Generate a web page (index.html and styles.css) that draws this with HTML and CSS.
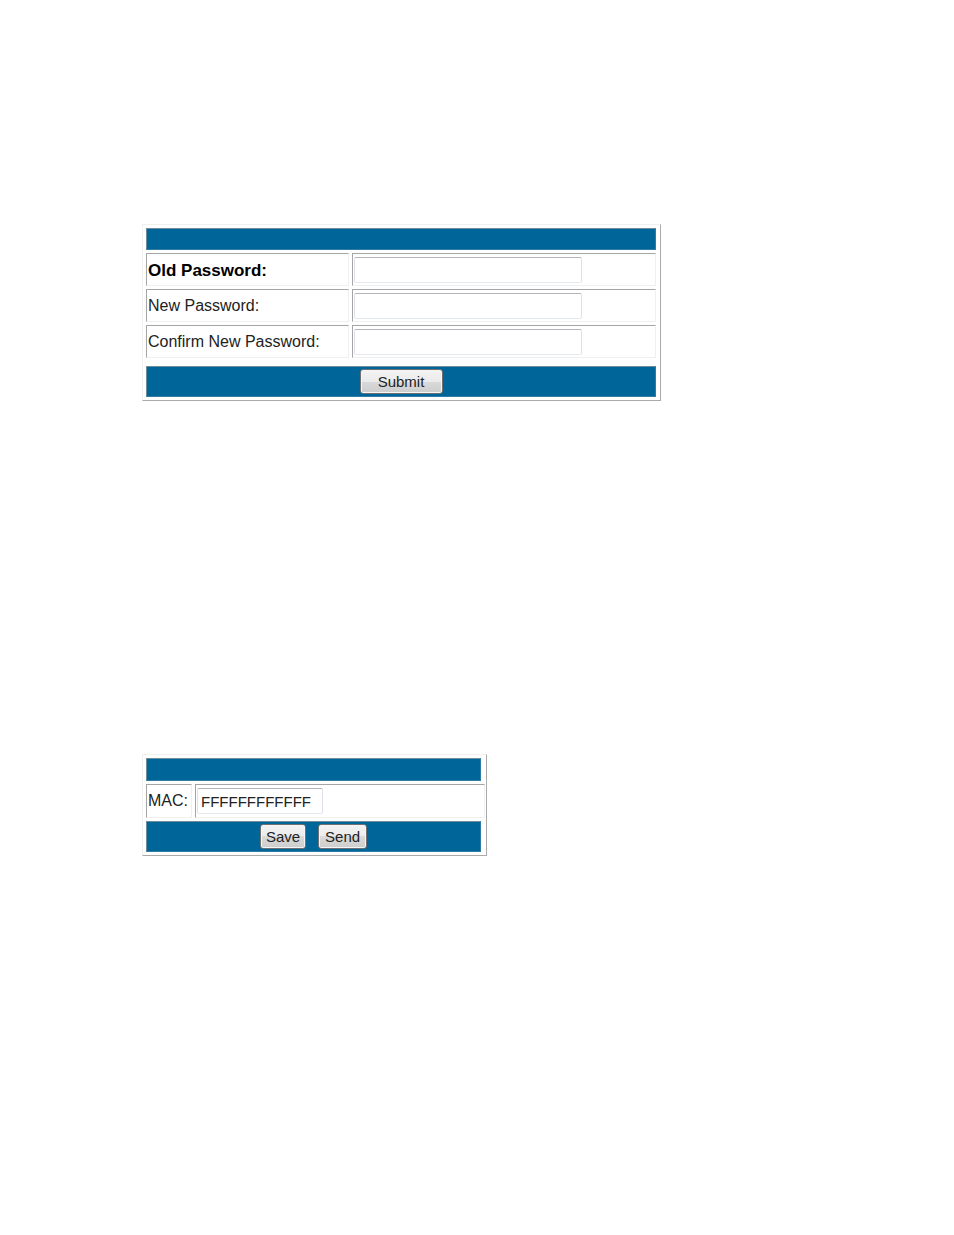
FILE: index.html
```html
<!DOCTYPE html>
<html lang="en">
<head>
<meta charset="utf-8">
<title>Device Settings</title>
<link rel="stylesheet" href="styles.css">
</head>
<body>
<main class="page">
  <form class="panel panel-password">
    <div class="bar"></div>
    <div class="row">
      <label class="cell label-strong" for="old">Old Password:</label>
      <div class="cell"><input class="field" type="password" id="old"></div>
    </div>
    <div class="row">
      <label class="cell" for="new">New Password:</label>
      <div class="cell"><input class="field" type="password" id="new"></div>
    </div>
    <div class="row">
      <label class="cell" for="confirm">Confirm New Password:</label>
      <div class="cell"><input class="field" type="password" id="confirm"></div>
    </div>
    <div class="bar bar-actions">
      <button class="button button-wide" type="button">Submit</button>
    </div>
  </form>
  <form class="panel panel-mac">
    <div class="bar"></div>
    <div class="row">
      <label class="cell" for="mac">MAC:</label>
      <div class="cell"><input class="field" type="text" id="mac" value="FFFFFFFFFFFF"></div>
    </div>
    <div class="bar bar-actions">
      <button class="button button-save" type="button">Save</button>
      <button class="button" type="button">Send</button>
    </div>
  </form>
</main>
</body>
</html>
```
FILE: styles.css
```css
* {
  box-sizing: border-box;
}

body {
  margin: 0;
  background: #fff;
  color: #222;
  font: 16px/20px "Liberation Sans", Arial, sans-serif;
}

.page {
  display: flex;
  flex-direction: column;
  gap: 353px;
  padding: 224px 142px;
}

.panel {
  display: flex;
  flex-direction: column;
  gap: 3px;
  width: 100%;
  padding: 3px 4px 3px 3px;
  border: 1px solid;
  border-color: #f0f0f0 #aaa #aaa #f0f0f0;
}

.panel-password {
  max-width: 519px;
}

.panel-mac {
  max-width: 345px;
  padding-right: 1px;
}

.bar {
  min-height: 22px;
  background: #069;
  border: 1px solid;
  border-color: #6d8b99 #2f7ba3 #2f7ba3 #6d8b99;
}

.panel-mac .bar {
  min-height: 23px;
  margin-right: 4px;
}

.panel .bar-actions {
  display: flex;
  justify-content: center;
  align-items: center;
  gap: 12px;
  min-height: 31px;
}

.panel-password .bar-actions {
  margin-top: 5px;
}

.row {
  display: grid;
  gap: 3px;
}

.panel-password .row {
  grid-template-columns: 2fr 3fr;
}

.panel-mac .row {
  grid-template-columns: 46px 1fr;
}

.cell {
  display: flex;
  align-items: center;
  min-width: 0;
  min-height: 33px;
  padding: 0 1px;
  border: 1px solid;
  border-color: #a5a5a5 #f0f0f0 #f0f0f0 #a5a5a5;
}

.panel-mac .cell {
  min-height: 34px;
}

.label-strong {
  padding-top: 2px;
  color: #000;
  font-size: 17px;
  font-weight: bold;
}

.field {
  width: 76%;
  height: 26px;
  padding: 0 3px;
  border: 1px solid;
  border-color: #b4b4ba #dfe1ea #e3e9ef #dfe1ea;
  border-radius: 2px;
  background: #fff;
  color: #222;
  font: inherit;
}

.panel-mac .field {
  width: 126px;
  font-size: 15px;
}

.button {
  height: 25px;
  padding: 0 6px;
  border: 1px solid #707070;
  border-radius: 3px;
  background: linear-gradient(#f3f3f3, #ebebeb 50%, #dadada 50%, #cdcdcd);
  box-shadow: inset 0 0 0 1px #f5f5f5;
  color: #222;
  font: inherit;
  font-size: 15px;
}

.button-wide {
  width: 83px;
}

.button-save {
  padding: 0 5px;
}
```
